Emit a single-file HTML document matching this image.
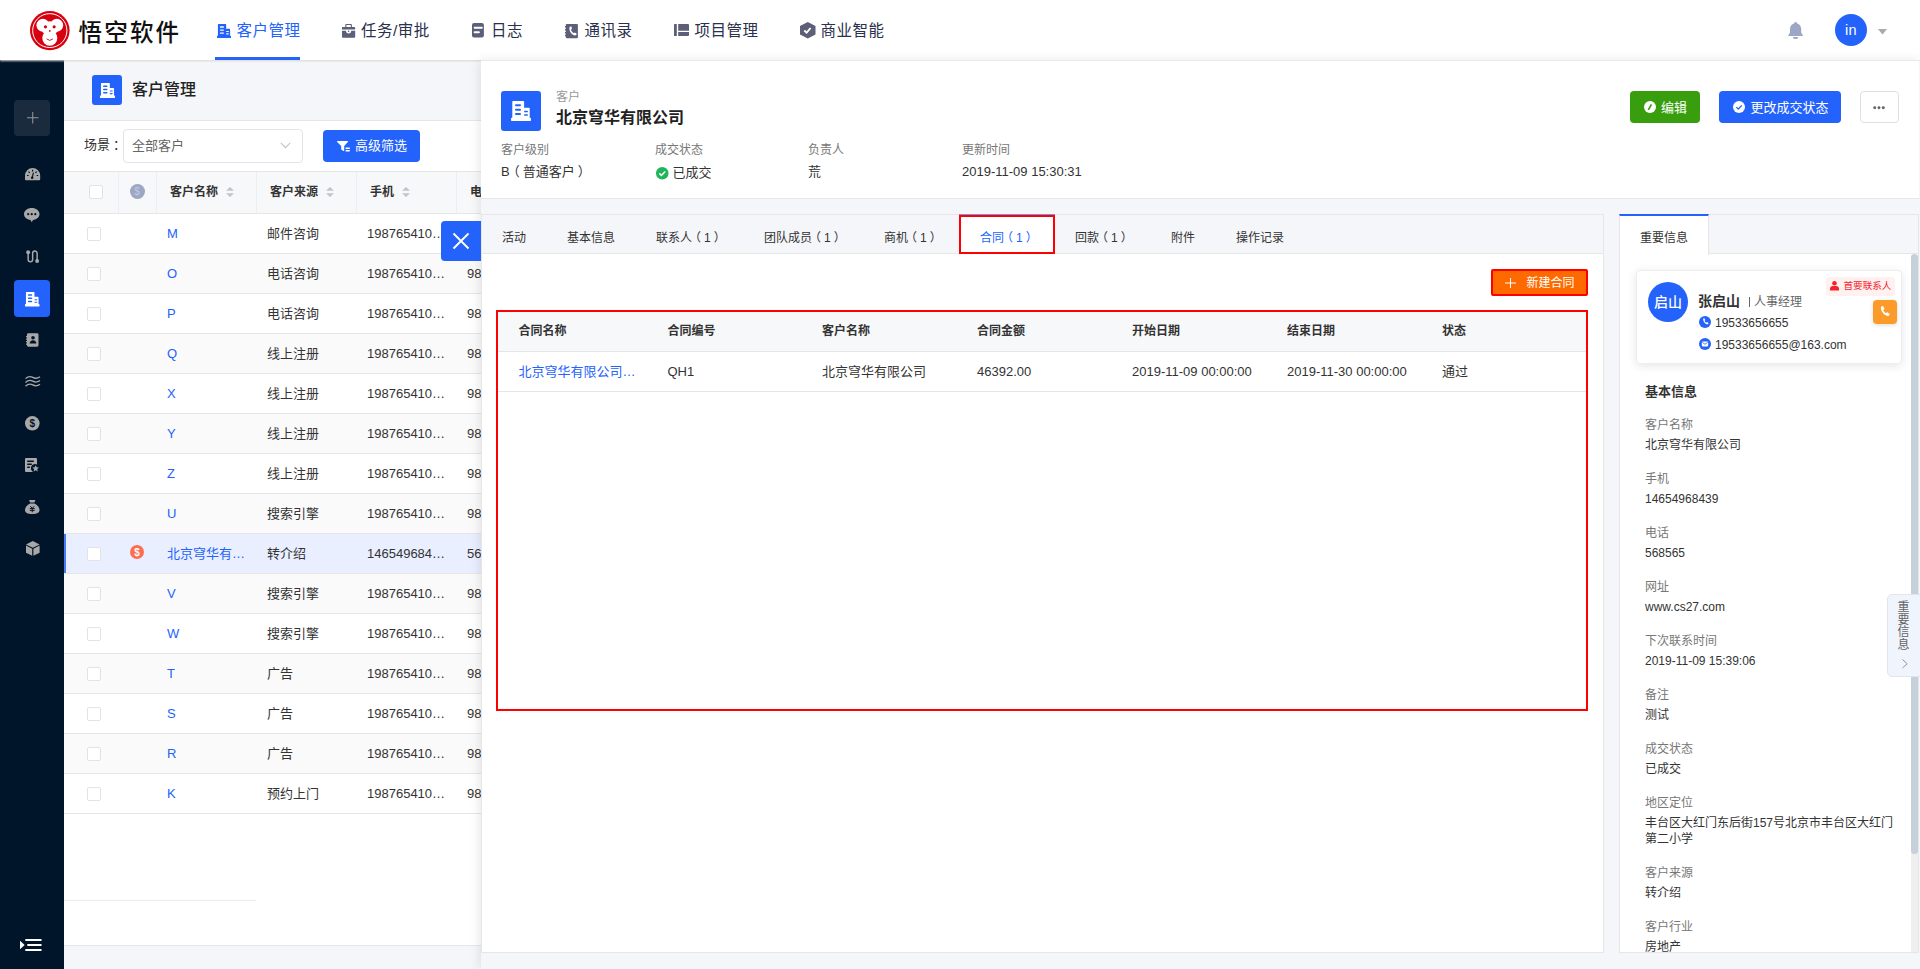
<!DOCTYPE html>
<html lang="zh-CN">
<head>
<meta charset="utf-8">
<title>客户管理</title>
<style>
*{box-sizing:border-box;margin:0;padding:0}
html,body{width:1920px;height:969px;overflow:hidden}
body{position:relative;background:#f5f6f9;font-family:"Liberation Sans","Noto Sans CJK SC",sans-serif;font-size:13px;color:#333;line-height:1}
.abs{position:absolute}
.t{position:absolute;white-space:nowrap;line-height:1}
svg{display:block;overflow:visible}
/* nav */
#nav{position:absolute;left:0;top:0;width:1920px;height:60px;background:#fff;box-shadow:0 1px 2px #d6d6d6;z-index:30}
#nav .tx{position:absolute;top:23px;white-space:nowrap;line-height:16px;font-size:15.5px;letter-spacing:.5px;color:#2a304d}
/* sidebar */
#side{position:absolute;left:0;top:60px;width:64px;height:909px;background:#001529;z-index:5}
/* list */
#list{position:absolute;left:64px;top:60px;width:1856px;height:909px;background:#f5f6f9}
#card{position:absolute;left:0;top:60px;width:1856px;height:826px;background:#fff;box-shadow:inset 0 1px 0 #e6e6e6,inset 0 -1px 0 #e6e6e6}
.cbx{position:absolute;width:14px;height:14px;border:1px solid #e0e3e9;border-radius:2px;background:#fff}
.th{font-size:12px;font-weight:bold;color:#333}
.row{position:absolute;left:0;width:1856px;height:40px;border-bottom:1px solid #e6e6e6;font-size:13px;color:#333}
.row.odd{background:#fafafa}
.row.cur{background:#e9efff;box-shadow:inset 2px 0 0 #4a7cf8}
.row .c{position:absolute;top:12.700px;white-space:nowrap;line-height:14px}
.row .nm{color:#2362fb}
/* detail */
#detail{position:absolute;left:481px;top:60px;width:1439px;height:909px;background:#f5f6f9;box-shadow:-2px 0 10px rgba(0,0,0,.09);z-index:40;border-top:1px solid #e6ebf3}
#dhead{position:absolute;left:0;top:0;width:1438px;height:138px;background:#fff;border-bottom:1px solid #e6e6e6}
.lbl{color:#777;font-size:12px}
.val{color:#333;font-size:13px}
.tab{position:absolute;top:17px;font-size:12px;color:#333;white-space:nowrap;line-height:1}
.f{position:absolute;left:25px;font-size:12px;white-space:nowrap;line-height:1}
.f.l{color:#777}
.f.v{color:#333}
.pl{position:relative;left:-3px}.pr{position:relative;left:3px}

</style>
</head>
<body>
<div id="list">
<div class="abs" style="left:28px;top:15px;width:30px;height:30px;border-radius:3px;background:#2362fb"></div>
<svg class="abs" style="left:35.5px;top:22.5px" width="15" height="15" viewBox="0 0 20 20"><path fill="#fff" d="M1.300.800a.8.800 0 0 1 .8-.8h10.200a.8.800 0 0 1 .8.800V6.700h4.800a.8.800 0 0 1 .8.800v9.200h.5a.8.800 0 0 1 .8.800v1.700a.8.800 0 0 1-.8.800H.8a.8.800 0 0 1-.8-.8v-1.700a.8.800 0 0 1 .8-.8h.5z"/><g fill="#2362fb"><rect x="4" y="3.200" width="6" height="2" rx="1"/><rect x="4" y="7.700" width="6" height="2" rx="1"/><rect x="4" y="12" width="6" height="2" rx="1"/><rect x="13.100" y="9.850" width="3.800" height="1.500" rx=".5"/><rect x="13.100" y="13.350" width="3.800" height="1.500" rx=".5"/></g></svg>
<div class="t" style="left:68px;top:22px;font-size:16px;font-weight:500;color:#222">客户管理</div>
<div id="card">
<div class="t" style="left:20px;top:18px;font-size:13px;color:#333">场景<span class="pr">：</span></div>
<div class="abs" style="left:59px;top:9px;width:180px;height:34px;border:1px solid #e2e4e8;border-radius:4px;background:#fff"></div>
<div class="t" style="left:68px;top:19px;font-size:13px;color:#666">全部客户</div>
<svg class="abs" style="left:216px;top:22px" width="11" height="7" viewBox="0 0 11 7"><path d="M0.8 0.8l4.7 4.9 4.7-4.9" fill="none" stroke="#c0c4cc" stroke-width="1.1"/></svg>
<div class="abs" style="left:259px;top:10px;width:97px;height:32px;border-radius:4px;background:#2362fb"></div>
<svg class="abs" style="left:272.5px;top:20.5px" width="13" height="11" viewBox="0 0 13 11"><path fill="#fff" d="M0.6 0h9.8c.5 0 .8.6.4 1L7.2 5v4.6c0 .4-.4.6-.7.4L4.2 8.600V5L.2 1C-.2.600.1 0 .6 0z"/><path fill="#fff" d="M8.600 6.600h4.200v1.500H8.600zM8.600 9h4.200v1.500H8.600z"/></svg>
<div class="t" style="left:291px;top:19px;font-size:13px;color:#fff">高级筛选</div>
<div class="abs" style="left:0;top:51px;width:1856px;height:43px;background:#f7f8fa;border-top:1px solid #e6e6e6;border-bottom:1px solid #e6e6e6"></div>
<div class="abs" style="left:54px;top:52px;width:1px;height:41px;background:#ebeef4"></div>
<div class="abs" style="left:92px;top:52px;width:1px;height:41px;background:#ebeef4"></div>
<div class="abs" style="left:192px;top:52px;width:1px;height:41px;background:#ebeef4"></div>
<div class="abs" style="left:292px;top:52px;width:1px;height:41px;background:#ebeef4"></div>
<div class="abs" style="left:392px;top:52px;width:1px;height:41px;background:#ebeef4"></div>
<div class="cbx" style="left:25px;top:65px"></div>
<div class="abs" style="left:65.500px;top:63.500px;width:15px;height:15px;border-radius:50%;background:#9ca7c5;color:#c3cadd;font-size:10px;line-height:15px;text-align:center">$</div>
<div class="t th" style="left:106px;top:65.800px">客户名称</div>
<div class="t th" style="left:206px;top:65.800px">客户来源</div>
<div class="t th" style="left:306px;top:65.800px">手机</div>
<div class="t th" style="left:406px;top:65.800px">电话</div>
<svg class="abs" style="left:162px;top:67px" width="8" height="10" viewBox="0 0 8 10"><path fill="#c0c4cc" d="M4 0l4 3.800H0zM4 10L0 6.200h8z"/></svg>
<svg class="abs" style="left:262px;top:67px" width="8" height="10" viewBox="0 0 8 10"><path fill="#c0c4cc" d="M4 0l4 3.800H0zM4 10L0 6.200h8z"/></svg>
<svg class="abs" style="left:338px;top:67px" width="8" height="10" viewBox="0 0 8 10"><path fill="#c0c4cc" d="M4 0l4 3.800H0zM4 10L0 6.200h8z"/></svg>
<div class="row" style="top:94px">
<div class="cbx" style="left:23px;top:13px"></div>
<div class="c nm" style="left:103px">M</div>
<div class="c" style="left:203px">邮件咨询</div>
<div class="c" style="left:303px">198765410…</div>
<div class="c" style="left:403px"></div>
</div>
<div class="row odd" style="top:134px">
<div class="cbx" style="left:23px;top:13px"></div>
<div class="c nm" style="left:103px">O</div>
<div class="c" style="left:203px">电话咨询</div>
<div class="c" style="left:303px">198765410…</div>
<div class="c" style="left:403px">98</div>
</div>
<div class="row" style="top:174px">
<div class="cbx" style="left:23px;top:13px"></div>
<div class="c nm" style="left:103px">P</div>
<div class="c" style="left:203px">电话咨询</div>
<div class="c" style="left:303px">198765410…</div>
<div class="c" style="left:403px">98</div>
</div>
<div class="row odd" style="top:214px">
<div class="cbx" style="left:23px;top:13px"></div>
<div class="c nm" style="left:103px">Q</div>
<div class="c" style="left:203px">线上注册</div>
<div class="c" style="left:303px">198765410…</div>
<div class="c" style="left:403px">98</div>
</div>
<div class="row" style="top:254px">
<div class="cbx" style="left:23px;top:13px"></div>
<div class="c nm" style="left:103px">X</div>
<div class="c" style="left:203px">线上注册</div>
<div class="c" style="left:303px">198765410…</div>
<div class="c" style="left:403px">98</div>
</div>
<div class="row odd" style="top:294px">
<div class="cbx" style="left:23px;top:13px"></div>
<div class="c nm" style="left:103px">Y</div>
<div class="c" style="left:203px">线上注册</div>
<div class="c" style="left:303px">198765410…</div>
<div class="c" style="left:403px">98</div>
</div>
<div class="row" style="top:334px">
<div class="cbx" style="left:23px;top:13px"></div>
<div class="c nm" style="left:103px">Z</div>
<div class="c" style="left:203px">线上注册</div>
<div class="c" style="left:303px">198765410…</div>
<div class="c" style="left:403px">98</div>
</div>
<div class="row odd" style="top:374px">
<div class="cbx" style="left:23px;top:13px"></div>
<div class="c nm" style="left:103px">U</div>
<div class="c" style="left:203px">搜索引擎</div>
<div class="c" style="left:303px">198765410…</div>
<div class="c" style="left:403px">98</div>
</div>
<div class="row cur" style="top:414px">
<div class="cbx" style="left:23px;top:13px"></div>
<div class="abs" style="left:66px;top:10.500px;width:14px;height:14px;border-radius:50%;background:#fc6e51;color:#fff;font-size:10px;font-weight:bold;line-height:15px;text-align:center">$</div>
<div class="c nm" style="left:103px">北京穹华有…</div>
<div class="c" style="left:203px">转介绍</div>
<div class="c" style="left:303px">146549684…</div>
<div class="c" style="left:403px">56</div>
</div>
<div class="row odd" style="top:454px">
<div class="cbx" style="left:23px;top:13px"></div>
<div class="c nm" style="left:103px">V</div>
<div class="c" style="left:203px">搜索引擎</div>
<div class="c" style="left:303px">198765410…</div>
<div class="c" style="left:403px">98</div>
</div>
<div class="row" style="top:494px">
<div class="cbx" style="left:23px;top:13px"></div>
<div class="c nm" style="left:103px">W</div>
<div class="c" style="left:203px">搜索引擎</div>
<div class="c" style="left:303px">198765410…</div>
<div class="c" style="left:403px">98</div>
</div>
<div class="row odd" style="top:534px">
<div class="cbx" style="left:23px;top:13px"></div>
<div class="c nm" style="left:103px">T</div>
<div class="c" style="left:203px">广告</div>
<div class="c" style="left:303px">198765410…</div>
<div class="c" style="left:403px">98</div>
</div>
<div class="row" style="top:574px">
<div class="cbx" style="left:23px;top:13px"></div>
<div class="c nm" style="left:103px">S</div>
<div class="c" style="left:203px">广告</div>
<div class="c" style="left:303px">198765410…</div>
<div class="c" style="left:403px">98</div>
</div>
<div class="row odd" style="top:614px">
<div class="cbx" style="left:23px;top:13px"></div>
<div class="c nm" style="left:103px">R</div>
<div class="c" style="left:203px">广告</div>
<div class="c" style="left:303px">198765410…</div>
<div class="c" style="left:403px">98</div>
</div>
<div class="row" style="top:654px">
<div class="cbx" style="left:23px;top:13px"></div>
<div class="c nm" style="left:103px">K</div>
<div class="c" style="left:203px">预约上门</div>
<div class="c" style="left:303px">198765410…</div>
<div class="c" style="left:403px">98</div>
</div>
<div class="abs" style="left:0;top:780px;width:192px;height:1px;background:#e9ecf2"></div>
</div>
</div>
<div id="side">
<div class="abs" style="left:14px;top:40px;width:36px;height:36px;border-radius:4px;background:#1a2b3e"></div>
<svg class="abs" style="left:26.500px;top:52px" width="11.500" height="11.500" viewBox="0 0 11.500 11.500"><path d="M5.750 0v11.500M0 5.750h11.500" stroke="#999" stroke-width="1" fill="none"/></svg>
<!-- gauge -->
<svg class="abs" style="left:24.600px;top:108px" width="15.200" height="12.300" viewBox="0 0 15.500 12.500"><path fill="#a8a8a8" d="M7.750 0a7.750 7.750 0 0 1 7.750 7.750v3.750a1 1 0 0 1-1 1H1a1 1 0 0 1-1-1V7.750A7.750 7.750 0 0 1 7.750 0z"/><g stroke="#001529" stroke-width="1.200" fill="none"><path d="M7.750 1.800v1.800M3.600 3.600l1.200 1.300M11.900 3.600l-1.200 1.300M2 7.600h1.700M13.500 7.600h-1.700M8.600 4.800l-1.200 5"/></g><circle cx="7.300" cy="10" r="1.300" fill="#001529"/></svg>
<!-- chat -->
<svg class="abs" style="left:24.300px;top:148px" width="15.500" height="14.200" viewBox="0 0 15.500 14.200"><path fill="#a8a8a8" d="M7.750 0c4.300 0 7.750 2.700 7.750 6.100 0 3.100-2.800 5.600-6.500 6l-1.250 2.100-1.250-2.100C2.800 11.700 0 9.200 0 6.100 0 2.700 3.450 0 7.750 0z"/><circle cx="4.200" cy="6.200" r="1.100" fill="#001529"/><circle cx="7.750" cy="6.200" r="1.100" fill="#001529"/><circle cx="11.300" cy="6.200" r="1.100" fill="#001529"/></svg>
<!-- route -->
<svg class="abs" style="left:25.500px;top:190.300px" width="13.200" height="13.200" viewBox="0 0 13.500 13.500"><path d="M2.200 3v6.800a2.300 2.300 0 0 0 4.600 0V3.400a2.300 2.300 0 0 1 4.600 0v7" fill="none" stroke="#a8a8a8" stroke-width="1.500"/><circle cx="2.200" cy="2.300" r="2" fill="#a8a8a8"/><circle cx="11.400" cy="11.200" r="2" fill="#a8a8a8"/></svg>
<!-- active -->
<div class="abs" style="left:14px;top:220px;width:35.500px;height:37px;border-radius:4px;background:#2362fb"></div>
<svg class="abs" style="left:24.8px;top:231.6px" width="14.5" height="14.5" viewBox="0 0 20 20"><path fill="#fff" d="M1.300.800a.8.800 0 0 1 .8-.8h10.200a.8.800 0 0 1 .8.800V6.700h4.800a.8.800 0 0 1 .8.800v9.200h.5a.8.800 0 0 1 .8.800v1.700a.8.800 0 0 1-.8.800H.8a.8.800 0 0 1-.8-.8v-1.700a.8.800 0 0 1 .8-.8h.5z"/><g fill="#2362fb"><rect x="4" y="3.200" width="6" height="2" rx="1"/><rect x="4" y="7.700" width="6" height="2" rx="1"/><rect x="4" y="12" width="6" height="2" rx="1"/><rect x="13.100" y="9.850" width="3.800" height="1.500" rx=".5"/><rect x="13.100" y="13.350" width="3.800" height="1.500" rx=".5"/></g></svg>
<!-- contacts -->
<svg class="abs" style="left:25.700px;top:273px" width="12.500" height="13.800" viewBox="0 0 13 14"><path fill="#a8a8a8" d="M2.500 0H11.500a1.500 1.500 0 0 1 1.500 1.500v11a1.500 1.500 0 0 1-1.500 1.500H2.500A1.500 1.500 0 0 1 1 12.500V12H0v-1.200h1V9.400H0V8.200h1V6.800H0V5.600h1V4.200H0V3h1V1.500A1.500 1.500 0 0 1 2.500 0z"/><circle cx="7.300" cy="4.800" r="1.900" fill="#001529"/><path fill="#001529" d="M3.800 10.800c0-2 1.500-3.400 3.500-3.400s3.500 1.400 3.500 3.400z"/></svg>
<!-- waves -->
<svg class="abs" style="left:24.700px;top:316.200px" width="15.500" height="11.300" viewBox="0 0 16 12"><g fill="none" stroke="#a8a8a8" stroke-width="1.400"><path d="M.3 2.800C3 .2 5-.2 8 1.500s5 1.300 7.700-.8"/><path d="M.3 6.800C3 4.200 5 3.800 8 5.500s5 1.300 7.700-.8"/><path d="M.3 10.800C3 8.200 5 7.800 8 9.500s5 1.300 7.700-.8"/></g></svg>
<!-- dollar -->
<svg class="abs" style="left:24.700px;top:355.600px" width="14.600" height="14.600" viewBox="0 0 14.600 14.600"><circle cx="7.300" cy="7.300" r="7.300" fill="#a8a8a8"/><text x="7.300" y="11" font-size="10" font-weight="bold" text-anchor="middle" fill="#001529" font-family="Liberation Sans,sans-serif">$</text></svg>
<!-- contract -->
<svg class="abs" style="left:25px;top:398px" width="14" height="14" viewBox="0 0 14 14"><path fill="#a8a8a8" d="M1 0h10a1 1 0 0 1 1 1v5.500a4 4 0 0 0-3.800 7.500H1a1 1 0 0 1-1-1V1a1 1 0 0 1 1-1z"/><path fill="#001529" d="M2.200 2.600h6.600v1.400H2.200zM2.200 5.600h4.600V7H2.200zM2.200 8.600h2.600V10H2.200z"/><path fill="#a8a8a8" d="M10.700 7.200l1 2 2.300.3-1.700 1.600.4 2.300-2-1.100-2 1.100.4-2.300-1.700-1.600 2.300-.3z"/></svg>
<!-- money bag -->
<svg class="abs" style="left:25px;top:440px" width="14.500" height="14" viewBox="0 0 14.500 14"><path fill="#a8a8a8" d="M4.800 0h4.900c.5 0 .8.500.5.900L9.300 2.600H5.200L4.300.9C4 .5 4.300 0 4.800 0zM5 3.500h4.500c2.800 1.200 5 4 5 6.500 0 2.600-2.500 4-7.250 4S0 12.600 0 10c0-2.500 2.200-5.300 5-6.500z"/><path d="M5.300 6.200l1.950 2.100 1.950-2.100M4.800 8.600h4.900M4.800 10.400h4.900M7.250 8.300v4" fill="none" stroke="#001529" stroke-width="1"/></svg>
<!-- cube -->
<svg class="abs" style="left:25.500px;top:480.600px" width="13.600" height="14.800" viewBox="0 0 13.600 14.800"><path fill="#a8a8a8" d="M6.800 0l6.800 3.400-6.800 3.400L0 3.400zM0 4.600l6.200 3.100v7.100L0 11.700zM13.600 4.600v7.100l-6.200 3.100V7.700z"/></svg>
<!-- collapse -->
<svg class="abs" style="left:19.800px;top:879px" width="21.500" height="12" viewBox="0 0 21.500 12"><path fill="#fff" d="M0 1.800l4.700 4.200L0 10.200zM5.300 0h16.200v2H5.300zM7.300 5h14.200v2H7.300zM5.300 10h16.200v2H5.300z"/></svg>
</div>

<div class="abs" style="left:441px;top:221px;width:40px;height:40px;border-radius:4px 0 0 4px;background:#2362fb;z-index:41"></div>
<svg class="abs" style="left:452.900px;top:233px;z-index:42" width="16" height="16" viewBox="0 0 16 16"><path d="M.5.500l15 15M15.500.500l-15 15" stroke="#fff" stroke-width="1.900" fill="none"/></svg>
<div id="detail">
<div id="dhead">
<div class="abs" style="left:20px;top:30px;width:40px;height:40px;border-radius:3px;background:#2362fb"></div>
<svg class="abs" style="left:30px;top:40px" width="20" height="20" viewBox="0 0 20 20"><path fill="#fff" d="M1.300.800a.8.800 0 0 1 .8-.8h10.200a.8.800 0 0 1 .8.800V6.700h4.800a.8.800 0 0 1 .8.800v9.200h.5a.8.800 0 0 1 .8.800v1.700a.8.800 0 0 1-.8.800H.8a.8.800 0 0 1-.8-.8v-1.700a.8.800 0 0 1 .8-.8h.5z"/><g fill="#2362fb"><rect x="4" y="3.200" width="6" height="2" rx="1"/><rect x="4" y="7.700" width="6" height="2" rx="1"/><rect x="4" y="12" width="6" height="2" rx="1"/><rect x="13.100" y="9.850" width="3.800" height="1.500" rx=".5"/><rect x="13.100" y="13.350" width="3.800" height="1.500" rx=".5"/></g></svg>
<div class="t" style="left:75px;top:30px;font-size:12px;color:#999">客户</div>
<div class="t" style="left:75px;top:48.800px;font-size:16px;font-weight:bold;color:#222">北京穹华有限公司</div>
<div class="t lbl" style="left:20px;top:83px">客户级别</div>
<div class="t lbl" style="left:174px;top:83px">成交状态</div>
<div class="t lbl" style="left:327px;top:83px">负责人</div>
<div class="t lbl" style="left:481px;top:83px">更新时间</div>
<div class="t val" style="left:20px;top:104px">B<span class="pl">（</span>普通客户<span class="pr">）</span></div>
<svg class="abs" style="left:174.500px;top:105.600px" width="12.500" height="12.500" viewBox="0 0 12.500 12.500"><circle cx="6.250" cy="6.250" r="6.250" fill="#20b559"/><path d="M3.300 6.400l2.100 2.100 3.800-4" fill="none" stroke="#fff" stroke-width="1.500"/></svg>
<div class="t val" style="left:191.500px;top:105px">已成交</div>
<div class="t val" style="left:327px;top:104px">荒</div>
<div class="t val" style="left:481px;top:103.500px">2019-11-09 15:30:31</div>
<!-- buttons -->
<div class="abs" style="left:1149px;top:30px;width:70px;height:32px;border-radius:4px;background:#389e0d"></div>
<svg class="abs" style="left:1162.700px;top:40.300px" width="12" height="12" viewBox="0 0 12 12"><circle cx="6" cy="6" r="6" fill="#fff"/><path d="M4.300 8.900l3.200-5.600" stroke="#389e0d" stroke-width="1.700" fill="none"/></svg>
<div class="t" style="left:1180px;top:40px;font-size:13px;color:#fff">编辑</div>
<div class="abs" style="left:1238px;top:30px;width:122px;height:32px;border-radius:4px;background:#2362fb"></div>
<svg class="abs" style="left:1251.700px;top:40.300px" width="12" height="12" viewBox="0 0 12 12"><circle cx="6" cy="6" r="6" fill="#fff"/><path d="M3.300 6.100l2 1.900 3.500-3.600" stroke="#2362fb" stroke-width="1.300" fill="none"/></svg>
<div class="t" style="left:1269.500px;top:40px;font-size:13px;color:#fff">更改成交状态</div>
<div class="abs" style="left:1379px;top:30px;width:39px;height:32px;border-radius:4px;background:#fff;border:1px solid #dcdfe6"></div>
<svg class="abs" style="left:1392.400px;top:44.800px" width="12" height="3.400" viewBox="0 0 12 3.400"><circle cx="1.700" cy="1.700" r="1.500" fill="#666"/><circle cx="6" cy="1.700" r="1.500" fill="#666"/><circle cx="10.300" cy="1.700" r="1.500" fill="#666"/></svg>
</div>

<!-- tabs card -->
<div id="tabs" class="abs" style="left:0;top:153px;width:1123px;height:739px;background:#fff;border:1px solid #e6e6e6">
<div class="abs" style="left:0;top:0;width:1121px;height:39px;background:#f5f6f9;border-bottom:1px solid #e6e6e6"></div>
<div class="tab" style="left:20px">活动</div>
<div class="tab" style="left:85px">基本信息</div>
<div class="tab" style="left:174px">联系人<span class="pl">（</span>1<span class="pr">）</span></div>
<div class="tab" style="left:282px">团队成员<span class="pl">（</span>1<span class="pr">）</span></div>
<div class="tab" style="left:402px">商机<span class="pl">（</span>1<span class="pr">）</span></div>
<div class="abs" style="left:477px;top:-1px;width:96px;height:3px;background:#7a8fe8"></div>
<div class="abs" style="left:477px;top:0;width:96px;height:39px;background:#fff;border:2px solid #f00"></div>
<div class="tab" style="left:498px;color:#2362fb">合同<span class="pl">（</span>1<span class="pr">）</span></div>
<div class="tab" style="left:593px">回款<span class="pl">（</span>1<span class="pr">）</span></div>
<div class="tab" style="left:689px">附件</div>
<div class="tab" style="left:754px">操作记录</div>
<!-- new contract button -->
<div class="abs" style="left:1009px;top:53.500px;width:97px;height:27px;background:#ff6a00;border:2px solid #f00;border-radius:2px"></div>
<svg class="abs" style="left:1023px;top:62.500px" width="11" height="10" viewBox="0 0 11 10"><path d="M5.500 0v10M0 5h11" stroke="#fff" stroke-width="1" fill="none"/></svg>
<div class="t" style="left:1044.500px;top:62px;font-size:12px;color:#fff">新建合同</div>
<!-- red box + table -->
<div class="abs" style="left:14px;top:95px;width:1092px;height:401px;border:2px solid #f00"></div>
<div class="abs" style="left:16px;top:97px;width:1088px;height:40px;background:#f7f8fa;border-bottom:1px solid #e6e6e6"></div>
<div class="abs" style="left:16px;top:176px;width:1088px;height:1px;background:#e6e6e6"></div>
<div class="t th" style="left:36.500px;top:110px">合同名称</div>
<div class="t th" style="left:185.500px;top:110px">合同编号</div>
<div class="t th" style="left:340px;top:110px">客户名称</div>
<div class="t th" style="left:495px;top:110px">合同金额</div>
<div class="t th" style="left:650px;top:110px">开始日期</div>
<div class="t th" style="left:805px;top:110px">结束日期</div>
<div class="t th" style="left:960px;top:110px">状态</div>
<div class="t val" style="left:36.500px;top:149.500px;color:#2362fb">北京穹华有限公司…</div>
<div class="t val" style="left:185.500px;top:149.500px">QH1</div>
<div class="t val" style="left:340px;top:149.500px">北京穹华有限公司</div>
<div class="t val" style="left:495px;top:149.500px">46392.00</div>
<div class="t val" style="left:650px;top:149.500px">2019-11-09 00:00:00</div>
<div class="t val" style="left:805px;top:149.500px">2019-11-30 00:00:00</div>
<div class="t val" style="left:960px;top:149.500px">通过</div>
</div>

<!-- right pane -->
<div id="rp" class="abs" style="left:1138px;top:153px;width:300px;height:739px;background:#fff;border:1px solid #e6e6e6">
<div class="abs" style="left:0;top:0;width:298px;height:39px;background:#f5f6f9;border-bottom:1px solid #e6e6e6"></div>
<div class="abs" style="left:-1px;top:-1px;width:90px;height:41px;background:#fff;border-top:2px solid #2362fb;border-right:1px solid #e6e6e6;border-left:1px solid #e6e6e6"></div>
<div class="t" style="left:20px;top:17px;font-size:12px;color:#333">重要信息</div>
<!-- contact card -->
<div class="abs" style="left:16px;top:54.500px;width:266px;height:94.500px;background:#fff;border:1px solid #ebeef5;border-radius:4px;box-shadow:0 2px 10px rgba(0,0,0,.1)"></div>
<div class="abs" style="left:28px;top:67px;width:40px;height:40px;border-radius:50%;background:#2362fb;color:#fff;font-size:14px;line-height:40px;text-align:center;font-weight:500">启山</div>
<div class="t" style="left:78px;top:79px;font-size:14px;font-weight:bold;color:#333">张启山</div>
<div class="abs" style="left:128.500px;top:82px;width:1px;height:10px;background:#666"></div>
<div class="t" style="left:134px;top:80.500px;font-size:12px;color:#666">人事经理</div>
<svg class="abs" style="left:78.500px;top:101px" width="12" height="12" viewBox="0 0 12 12"><circle cx="6" cy="6" r="6" fill="#2362fb"/><path fill="#fff" d="M4.300 2.600l1.100-.3.900 1.900-.8.600c.3.800.8 1.500 1.600 2l.7-.7 1.700 1-.4 1.100c-.8.400-2.300-.1-3.500-1.500C4.300 5.200 3.900 3.500 4.300 2.600z"/></svg>
<div class="t" style="left:95px;top:102px;font-size:12px;color:#333">19533656655</div>
<svg class="abs" style="left:78.500px;top:123px" width="12" height="12" viewBox="0 0 12 12"><circle cx="6" cy="6" r="6" fill="#2362fb"/><rect x="2.800" y="3.600" width="6.400" height="4.800" rx=".8" fill="#fff"/><path d="M3.300 4.300l2.700 2 2.700-2" stroke="#2362fb" stroke-width=".8" fill="none"/></svg>
<div class="t" style="left:95px;top:124px;font-size:12px;color:#333">19533656655@163.com</div>
<div class="abs" style="left:206px;top:61.500px;width:69px;height:19px;border-radius:3px;background:#fff1f0"></div>
<svg class="abs" style="left:210.200px;top:66px" width="9" height="9.500" viewBox="0 0 9 9.500"><circle cx="4.500" cy="2.300" r="2.300" fill="#f5222d"/><path fill="#f5222d" d="M0 9.500V8a3 3 0 0 1 3-3h3a3 3 0 0 1 3 3v1.500z"/></svg>
<div class="t" style="left:223.500px;top:66px;font-size:9.600px;color:#f5222d">首要联系人</div>
<div class="abs" style="left:253px;top:85px;width:24px;height:24px;border-radius:4px;background:#fc9a2a;box-shadow:0 1px 4px rgba(0,0,0,.15)"></div>
<svg class="abs" style="left:259px;top:91px" width="12" height="12" viewBox="0 0 12 12"><path fill="#fff" d="M2.200.600l1.900-.5 1.400 3-1.300 1c.5 1.300 1.400 2.400 2.600 3.200l1.100-1.100 2.800 1.600-.7 1.900c-1.300.6-3.800-.2-5.800-2.500C1.900 4.700 1.500 2.100 2.200.600z"/></svg>
<!-- basic info -->
<div class="abs" style="left:0;top:40px;width:298px;height:697px;overflow:hidden"><div class="abs" style="left:0;top:-40px;width:298px;height:737px">
<div class="t" style="left:25px;top:170px;font-size:13px;font-weight:bold;color:#333">基本信息</div>
<div class="f l" style="top:204px">客户名称</div><div class="f v" style="top:224px">北京穹华有限公司</div>
<div class="f l" style="top:258px">手机</div><div class="f v" style="top:278px">14654968439</div>
<div class="f l" style="top:312px">电话</div><div class="f v" style="top:332px">568565</div>
<div class="f l" style="top:366px">网址</div><div class="f v" style="top:386px">www.cs27.com</div>
<div class="f l" style="top:420px">下次联系时间</div><div class="f v" style="top:440px">2019-11-09 15:39:06</div>
<div class="f l" style="top:474px">备注</div><div class="f v" style="top:494px">测试</div>
<div class="f l" style="top:528px">成交状态</div><div class="f v" style="top:548px">已成交</div>
<div class="f l" style="top:582px">地区定位</div><div class="f v" style="top:602px">丰台区大红门东后街157号北京市丰台区大红门</div><div class="f v" style="top:618px">第二小学</div>
<div class="f l" style="top:652px">客户来源</div><div class="f v" style="top:672px">转介绍</div>
<div class="f l" style="top:706px">客户行业</div><div class="f v" style="top:726px">房地产</div>
</div></div>
<!-- scrollbar -->
<div class="abs" style="left:291px;top:40px;width:7px;height:697px;background:#efefef"></div>
<div class="abs" style="left:291px;top:38.500px;width:7px;height:600.500px;border-radius:3.500px;background:#c5d0db"></div>
</div>
<!-- side tag -->
<div class="abs" style="left:1406px;top:533px;width:34px;height:83px;background:#f0f4fd;border:1px solid #e1e5ee;border-radius:5px 0 0 5px"></div>
<div class="abs" style="left:1416.500px;top:540px;width:12px;font-size:12px;line-height:12.700px;color:#666;text-align:center">重要信息</div>
<svg class="abs" style="left:1420.500px;top:598px" width="6" height="9.500" viewBox="0 0 6 9.500"><path d="M.5.500l4.700 4.250L.5 9" fill="none" stroke="#8e97ab" stroke-width="1"/></svg>
</div>

<div id="nav">
<svg class="abs" style="left:29.900px;top:10.700px" width="39.600" height="39.200" viewBox="0 0 40 40" preserveAspectRatio="none">
<circle cx="20" cy="20" r="20" fill="#d7000f"/>
<circle cx="20" cy="20" r="17.3" fill="none" stroke="#fff" stroke-width="1"/>
<circle cx="13" cy="14.500" r="6.500" fill="#fff"/><circle cx="27" cy="14.500" r="6.500" fill="#fff"/>
<ellipse cx="20" cy="17.500" rx="9" ry="7" fill="#fff"/>
<ellipse cx="20" cy="27.500" rx="7.600" ry="8" fill="#fff"/>
<circle cx="15.600" cy="16.200" r="1.600" fill="#d7000f"/><circle cx="24.400" cy="16.200" r="1.600" fill="#d7000f"/>
<circle cx="20" cy="20.300" r="0.900" fill="#d7000f"/>
<path d="M16.800 28.500q3.200 3 6.400 0" fill="none" stroke="#d7000f" stroke-width="0.900"/>
</svg>
<div class="t" style="left:78.500px;top:21.500px;font-size:23.500px;font-weight:500;color:#111;letter-spacing:2.200px">悟空软件</div>
<svg class="abs" style="left:216.5px;top:24px" width="14" height="14" viewBox="0 0 20 20"><path fill="#2362fb" d="M1.300.800a.8.800 0 0 1 .8-.8h10.200a.8.800 0 0 1 .8.800V6.700h4.800a.8.800 0 0 1 .8.800v9.200h.5a.8.800 0 0 1 .8.800v1.700a.8.800 0 0 1-.8.800H.8a.8.800 0 0 1-.8-.8v-1.700a.8.800 0 0 1 .8-.8h.5z"/><g fill="#fff"><rect x="4" y="3.200" width="6" height="2" rx="1"/><rect x="4" y="7.700" width="6" height="2" rx="1"/><rect x="4" y="12" width="6" height="2" rx="1"/><rect x="13.100" y="9.850" width="3.800" height="1.500" rx=".5"/><rect x="13.100" y="13.350" width="3.800" height="1.500" rx=".5"/></g></svg>
<div class="tx" style="left:236.500px;color:#2362fb">客户管理</div>
<div class="abs" style="left:215px;top:57px;width:85px;height:3px;background:#2362fb"></div>
<svg class="abs" style="left:341.900px;top:24.100px" width="13.200" height="13.700" viewBox="0 0 13.200 13.700"><g fill="#5c5f77"><path d="M3.300 2.900V1a1 1 0 0 1 1-1h4.600a1 1 0 0 1 1 1v1.900H8.800V1.100H4.400v1.800z"/><path d="M.8 2.900h11.600a.8.800 0 0 1 .8.800v1.800H0V3.700a.8.800 0 0 1 .8-.8z"/><path d="M0 6.800h4a2.600 2.600 0 0 0 5.200 0h4v5.900a1 1 0 0 1-1 1H1a1 1 0 0 1-1-1z"/><circle cx="6.600" cy="7.300" r=".8"/></g></svg>
<div class="tx" style="left:361px">任务/审批</div>
<svg class="abs" style="left:472.100px;top:23.300px" width="11.900" height="14.500" viewBox="0 0 11.900 14.500"><rect width="11.900" height="14.500" rx="2" fill="#5c5f77"/><rect x="1.600" y="3.700" width="9.200" height="2.100" rx="1" fill="#fff"/><rect x="1.600" y="8.200" width="6.300" height="2.100" rx="1" fill="#fff"/></svg>
<div class="tx" style="left:491px">日志</div>
<svg class="abs" style="left:564.900px;top:23.600px" width="12.900" height="14.200" viewBox="0 0 12.900 14.200"><path fill="#5c5f77" d="M1.800 0h10.100a1 1 0 0 1 1 1v12.200a1 1 0 0 1-1 1H1.800a1 1 0 0 1-1-1v-.9H0v-1.500h.8V9.400H0V7.900h.8V6.500H0V5h.8V3.600H0V2.100h.8V1a1 1 0 0 1 1-1z"/><path fill="#fff" d="M4.400 3.500c.2-.7 1.200-1.200 2-1 .3.900.5 1.900.5 2.600l-.9.400c.4 1.600 1.400 2.900 2.900 3.700l.8-.8c.7.300 1.400.8 2 1.400-.1.900-.9 1.600-1.700 1.600-3.200-.3-6-4-5.600-7.900z"/></svg>
<div class="tx" style="left:584.500px">通讯录</div>
<svg class="abs" style="left:673.500px;top:24px" width="15" height="12" viewBox="0 0 15 12"><path fill="#5c5f77" d="M.5 0h2.300v12H.5a.5.500 0 0 1-.5-.5V.5A.5.500 0 0 1 .5 0zM4.200 0H14a1 1 0 0 1 1 1v5.700H4.200zM4.200 8H15v3a1 1 0 0 1-1 1H4.200z"/></svg>
<div class="tx" style="left:694.500px">项目管理</div>
<svg class="abs" style="left:799.500px;top:22px" width="15.500" height="16.500" viewBox="0 0 15.500 16.500"><path fill="#5c5f77" d="M7.750 0L15.500 4.100v8.300L7.750 16.500 0 12.400V4.100z"/><path d="M4.300 8.500l2.300 2.100 4-4.600" fill="none" stroke="#fff" stroke-width="1.900"/></svg>
<div class="tx" style="left:820.500px">商业智能</div>
<svg class="abs" style="left:1787.600px;top:21.900px" width="15.200" height="17" viewBox="0 0 15.200 17"><path fill="#9ba7c4" d="M7.600 0a1.600 1.600 0 0 1 1.600 1.500c2.400.7 4 2.800 4 5.300v3.700l2 3.400H0l2-3.400V6.800c0-2.500 1.600-4.600 4-5.300A1.600 1.600 0 0 1 7.600 0zM5 14.900h5.200a2.600 2.200 0 0 1-5.200 0z"/></svg>
<div class="abs" style="left:1835px;top:14px;width:32px;height:32px;border-radius:50%;background:#2362fb;color:#fff;font-size:14.500px;line-height:33px;text-align:center;letter-spacing:.3px">in</div>
<svg class="abs" style="left:1878px;top:28.500px" width="9" height="5.500" viewBox="0 0 9 5.500"><path fill="#aaa" d="M0 0h9L4.500 5.500z"/></svg>
</div>

</body>
</html>
